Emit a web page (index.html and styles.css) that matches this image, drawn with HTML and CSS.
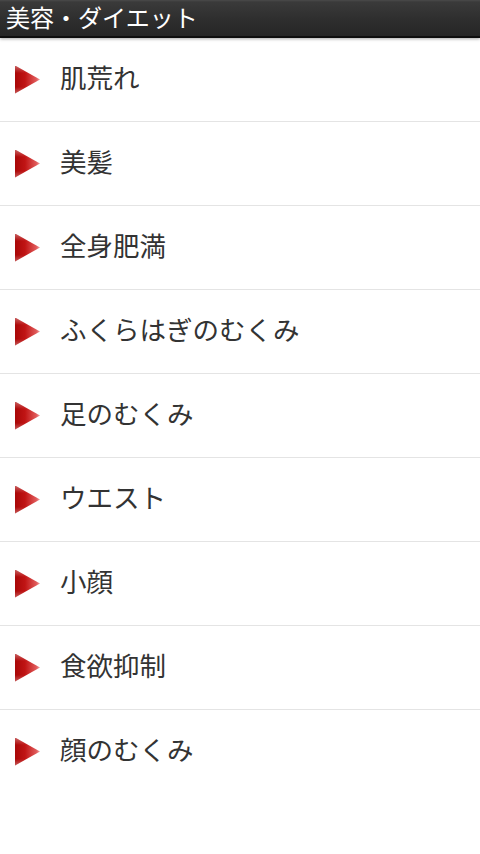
FILE: index.html
```html
<!DOCTYPE html>
<html lang="ja">
<head>
  <meta charset="UTF-8" />
  <meta name="viewport" content="width=device-width, initial-scale=1" />
  <title>美容・ダイエット</title>
  <link rel="stylesheet" href="styles.css">
</head>
<body>

  <!-- Title bar -->
  <header class="title-bar">美容・ダイエット</header>

  <!-- Category list -->
  <ul class="menu-list">
    <li><span class="arrow"></span><span class="label">肌荒れ</span></li>
    <li><span class="arrow"></span><span class="label">美髪</span></li>
    <li><span class="arrow"></span><span class="label">全身肥満</span></li>
    <li><span class="arrow"></span><span class="label">ふくらはぎのむくみ</span></li>
    <li><span class="arrow"></span><span class="label">足のむくみ</span></li>
    <li><span class="arrow"></span><span class="label">ウエスト</span></li>
    <li><span class="arrow"></span><span class="label">小顔</span></li>
    <li><span class="arrow"></span><span class="label">食欲抑制</span></li>
    <li><span class="arrow"></span><span class="label">顔のむくみ</span></li>
  </ul>

</body>
</html>
```

FILE: styles.css
```css
body {
  margin: 0;
  background: #fff;
  font-family: "Noto Sans CJK JP", "Noto Sans", sans-serif;
  color: #333;
}

.title-bar {
  height: 36px;
  line-height: 34px;
  padding-left: 6px;
  font-size: 24px;
  color: #fff;
  background: linear-gradient(#4a4a4a 0, #3a3a3a 2px, #2f2f2f 50%, #262626 100%);
  border-bottom: 2px solid #0e0e0e;
  box-shadow: 0 1px 3px rgba(0,0,0,0.35);
  position: relative;
  z-index: 1;
}

.menu-list {
  list-style: none;
  margin: 0;
  padding: 0;
}

.menu-list li {
  height: 83px;
  display: flex;
  align-items: center;
  font-size: 26.5px;
  border-bottom: 1px solid #e4e4e4;
}

.menu-list li:last-child {
  border-bottom: none;
}

.label {
  line-height: 1;
  margin-bottom: 4px;
}

/* red pointer, soft on the edges like the old bitmap */
.arrow {
  width: 25px;
  height: 28px;
  margin: 0 20px 0 15px;
  flex-shrink: 0;
  clip-path: polygon(0 0, 100% 50%, 0 100%);
  background:
    linear-gradient(rgba(255,255,255,0.35), rgba(255,255,255,0) 25%, rgba(255,255,255,0) 75%, rgba(255,255,255,0.35)),
    linear-gradient(90deg, #a80808 0%, #c01414 40%, #e05a5a 85%, #f0a0a0 100%);
}
```
